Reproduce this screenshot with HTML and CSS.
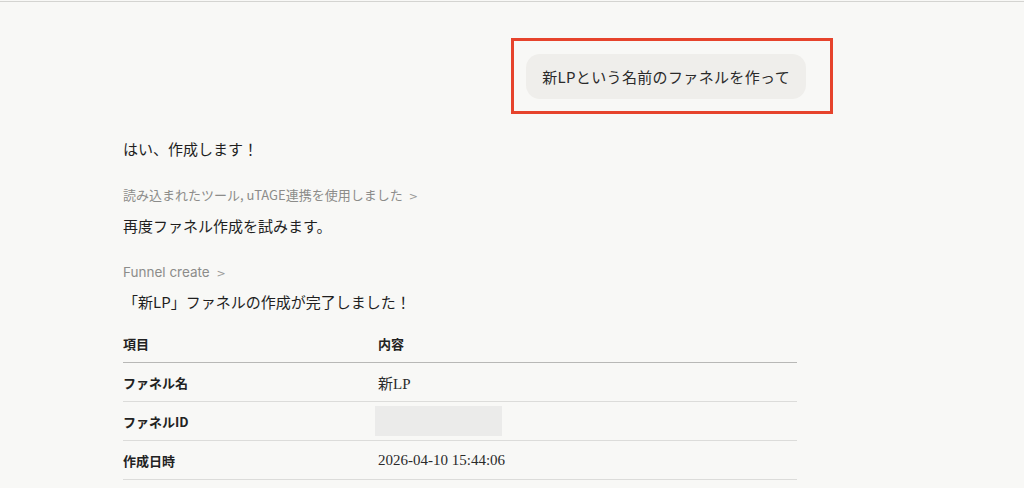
FILE: index.html
```html
<!DOCTYPE html>
<html lang="ja">
<head>
    <meta charset="UTF-8">
    <meta name="viewport" content="width=device-width, initial-scale=1.0">
    <title>Funnel create</title>
    <link rel="stylesheet" href="styles.css">
</head>
<body>
    <div class="top-rule"></div>

    <main class="chat">
        <div class="user-row">
            <div class="highlight">
                <div class="user-bubble">新LPという名前のファネルを作って</div>
            </div>
        </div>

        <div class="reply">
            <p class="text first">はい、作成します！</p>

            <p class="tool">読み込まれたツール, uTAGE連携を使用しました <span class="chev">&gt;</span></p>
            <p class="text">再度ファネル作成を試みます。</p>

            <p class="tool tool-en">Funnel create <span class="chev">&gt;</span></p>
            <p class="text">「新LP」ファネルの作成が完了しました！</p>

            <div class="result-table">
                <div class="cell head">項目</div>
                <div class="cell head">内容</div>

                <div class="cell key">ファネル名</div>
                <div class="cell value">新LP</div>

                <div class="cell key">ファネルID</div>
                <div class="cell value"><span class="redacted"></span></div>

                <div class="cell key">作成日時</div>
                <div class="cell value">2026-04-10 15:44:06</div>
            </div>
        </div>
    </main>
</body>
</html>
```

FILE: styles.css
```css
* {
    margin: 0;
    padding: 0;
    box-sizing: border-box;
}

body {
    font-family: "Noto Sans CJK JP", "Noto Sans", sans-serif;
    background: #f8f8f6;
    color: #222;
    height: 488px;
    overflow: hidden;
    padding-top: 1px;
}

.top-rule {
    height: 1px;
    background: #d4d4d1;
}

.chat {
    width: 710px;
    margin-left: 123px;
}

/* user message with red annotation frame */
.user-row {
    display: flex;
    justify-content: flex-end;
    padding-top: 36px;
}

.highlight {
    border: 3px solid #e6432c;
    padding: 13px 24px 12px 12px;
}

.user-bubble {
    background: #efeeeb;
    border-radius: 14px;
    padding: 0 16px;
    height: 45px;
    display: flex;
    align-items: center;
    font-size: 15px;
    color: #2a2a2a;
    letter-spacing: 0.35px;
}

.reply {
    padding-top: 23px;
}

.text {
    font-size: 15px;
    line-height: 24px;
    color: #1f1f1f;
}

.tool {
    font-size: 13px;
    line-height: 20px;
    color: #8c8c8a;
    margin-top: 24px;
    margin-bottom: 7px;
}

.tool-en {
    font-family: Inter, "Noto Sans", sans-serif;
    font-size: 13.5px;
    margin-top: 24px;
    margin-bottom: 6px;
}

.chev {
    font-family: "DejaVu Sans", sans-serif;
    font-size: 11px;
    color: #9a9a98;
    margin-left: 3px;
}

.result-table {
    width: 674px;
    margin-top: 11px;
    display: grid;
    grid-template-columns: 255px 1fr;
}

.cell {
    height: 39px;
    display: flex;
    align-items: center;
    border-bottom: 1px solid #dcdcda;
    font-size: 13px;
}

.cell.head {
    font-weight: 700;
    border-bottom: 1.5px solid #b8b8b6;
    height: 38px;
}

.cell.key {
    font-weight: 700;
}

.cell.value {
    font-family: "Liberation Serif", "Noto Sans CJK JP", serif;
    font-size: 15px;
    color: #2a2a2a;
}

.redacted {
    display: block;
    width: 127px;
    height: 30px;
    background: #ebebea;
    margin-left: -3px;
}
```
